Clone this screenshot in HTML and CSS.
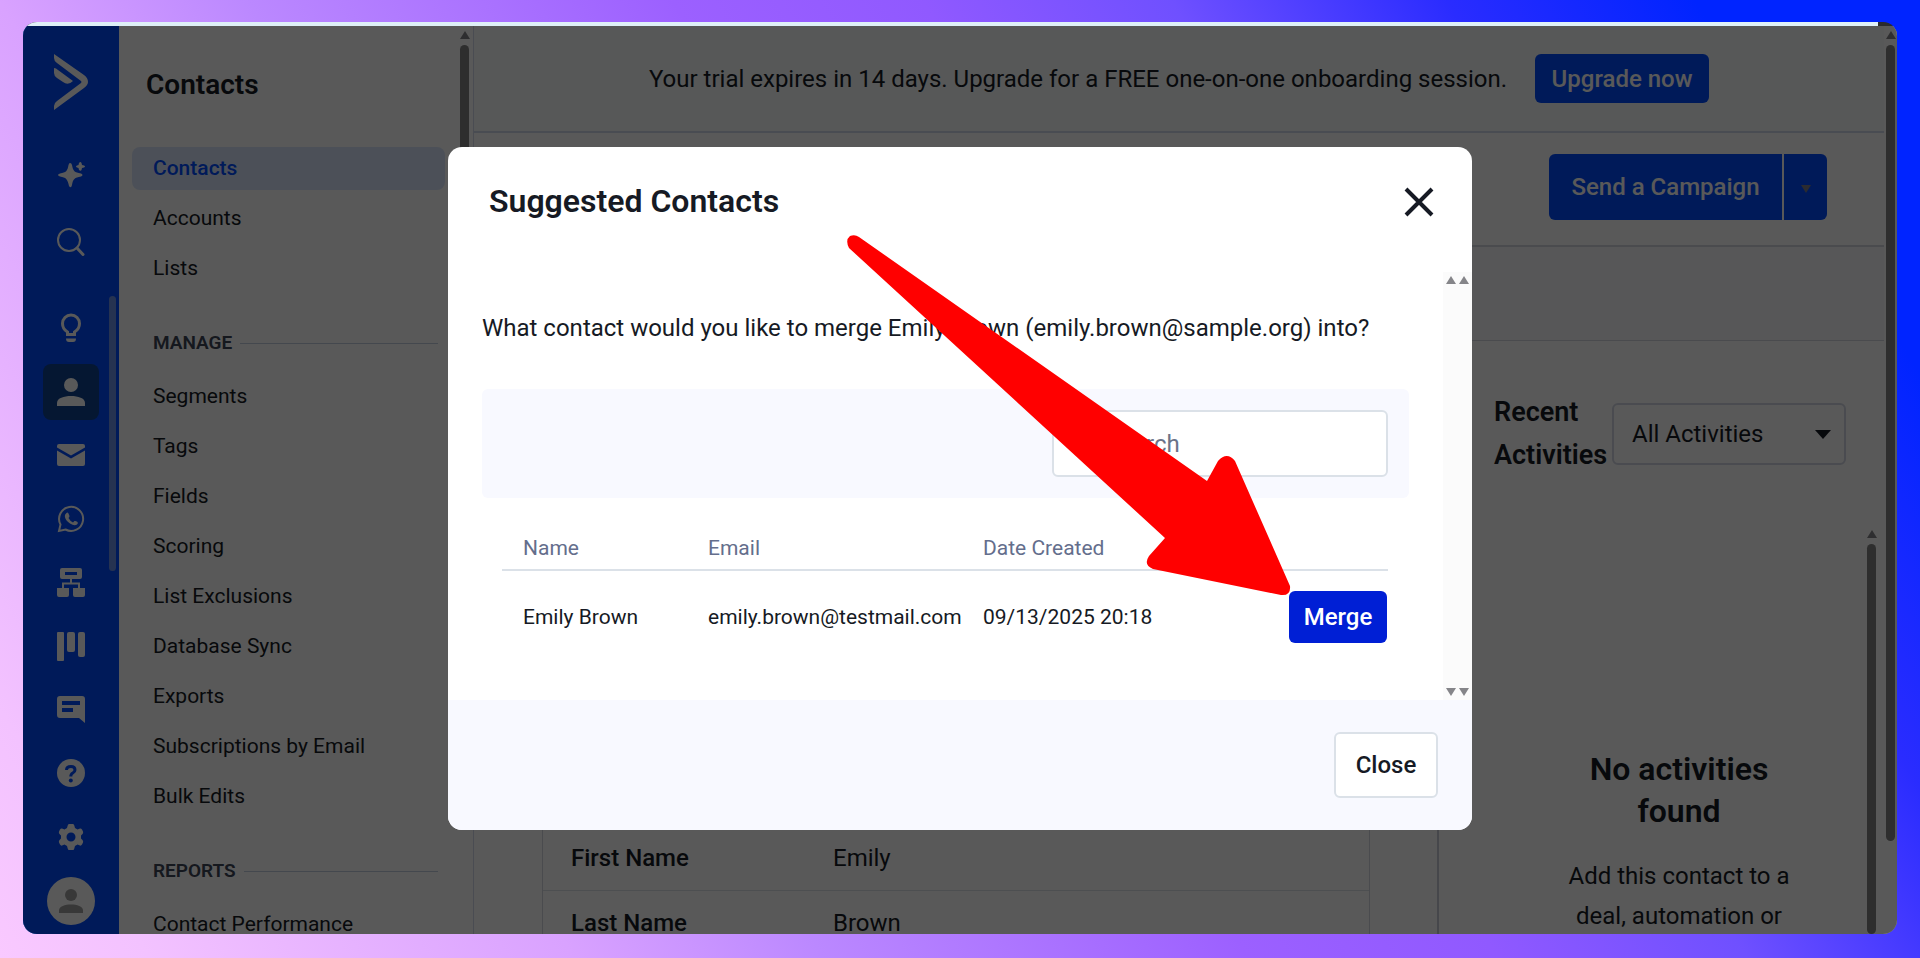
FILE: index.html
```
<!DOCTYPE html>
<html lang="en">
<head>
    <meta charset="UTF-8">
    <meta name="viewport" content="width=device-width, initial-scale=1.0">
    <title>Contacts</title>
    <link rel="stylesheet" href="styles.css">
</head>
<body>
    <div class="window">
        <div class="strip"></div>
        <div class="app">
            <nav class="rail">
                <a class="logo" href="#" aria-label="Home">
                    <svg width="36" height="56" viewBox="0 0 36 56"><path d="M1 0 L31 21 Q35 24 35 28 Q35 31 31 34 L1 56 V52 Q1 49 4 47 L28 29 Q29 28 28 27 L4 9 Q1 7 1 4 Z M1 14 Q3 14 5 16 L20 27 Q15 32 10 28 L4 24 Q1 22 1 19 Z"/></svg>
                </a>
                <div class="rail-top">
                    <a class="rail-item" href="#" aria-label="AI"><svg width="28" height="28" viewBox="0 0 28 28"><path d="M13 2 Q14.500 2 15 4 C16 10 17.500 11.500 24 12.500 Q27 14 24 15.500 C17.500 16.500 16 18 15 24 Q14 28 12 25 C10.500 18 9 16.500 3 15.500 Q-1 14 3 12.500 C9 11.500 10.500 10 11.500 4 Q12 2 13 2 Z M22 2 Q23.500 0 24.500 2 L25 4 L27 4.500 Q29 5.500 27 6.500 L25 7 L24.500 9 Q23.500 10.500 22 9 L21.500 7 L20 6.500 Q18 5.500 20 4.500 L21.500 4 Z"/></svg></a>
                    <a class="rail-item" href="#" aria-label="Search"><svg width="28" height="28" viewBox="0 0 28 28"><circle class="line" cx="12" cy="12" r="11"/><path class="line thick" d="M20 20 L26 26.500"/></svg></a>
                </div>
                <div class="rail-list">
                    <a class="rail-item" href="#" aria-label="Tips"><svg width="28" height="30" viewBox="0 0 28 30"><path class="line bold" d="M10.500 21.500 V19 Q5.500 16 5.500 10.500 A8.500 8.500 0 0 1 22.500 10.500 Q22.500 16 17.500 19 V21.500 Z"/><path d="M9 25.500 H19 Q19 29 16 29 H12 Q9 29 9 25.500 Z"/></svg></a>
                    <a class="rail-item current" href="#" aria-label="Contacts"><svg width="28" height="28" viewBox="0 0 28 28"><circle cx="14" cy="7" r="7"/><path d="M0 28 V25 C0 20 7 18 14 18 C21 18 28 20 28 25 V28 Z"/></svg></a>
                    <a class="rail-item" href="#" aria-label="Campaigns"><svg width="28" height="22" viewBox="0 0 28 22"><path d="M2 0 H26 Q28 0 28 2 V3.500 L14 11.500 L0 3.500 V2 Q0 0 2 0 Z M0 6.500 L14 14.500 L28 6.500 V20 Q28 22 26 22 H2 Q0 22 0 20 Z"/></svg></a>
                    <a class="rail-item" href="#" aria-label="WhatsApp"><svg width="28" height="28" viewBox="0 0 28 28"><path class="line" d="M2 26 L3.500 19.500 A12 12 0 1 1 8.500 24.500 Z"/><path d="M9.500 8 Q10.500 7 11.500 8.500 L12.500 11 Q12.500 12 11.500 13 Q13 16 16 17.500 L17.500 16 Q18.500 15.500 20.500 17 Q21.500 18 20 19.500 Q17.500 21.500 13 18.500 Q8 15 7.800 11 Q8 9 9.500 8 Z"/></svg></a>
                    <a class="rail-item" href="#" aria-label="Automations"><svg width="28" height="29" viewBox="0 0 28 29"><path fill-rule="evenodd" d="M5 0 H23 Q25 0 25 2 V9 Q25 11 23 11 H5 Q3 11 3 9 V2 Q3 0 5 0 Z M8 4 V7 H20 V4 Z"/><path class="line" d="M14 11 V15.500 M6 20 V15.500 H22 V20"/><path d="M0 20 H12 V27 Q12 29 10 29 H2 Q0 29 0 27 Z M16 20 H28 V27 Q28 29 26 29 H18 Q16 29 16 27 Z"/></svg></a>
                    <a class="rail-item" href="#" aria-label="Deals"><svg width="28" height="29" viewBox="0 0 28 29"><rect width="7" height="29" rx="1"/><rect x="10" width="8" height="20" rx="2"/><rect x="21" width="7" height="25" rx="2"/></svg></a>
                    <a class="rail-item" href="#" aria-label="Conversations"><svg width="28" height="27" viewBox="0 0 28 27"><path fill-rule="evenodd" d="M3 0 H25 Q28 0 28 3 V27 L22 22 H3 Q0 22 0 19 V3 Q0 0 3 0 Z M5 5 V9 H23 V5 Z M5 12 V16 H16 V12 Z"/></svg></a>
                    <a class="rail-item" href="#" aria-label="Help"><svg width="28" height="28" viewBox="0 0 28 28"><circle cx="14" cy="14" r="14"/><path class="hole" d="M9.500 11 Q9.500 7.500 14 7.500 Q18 7.500 18 11 Q18 12.800 15.800 14 Q13.800 15 13.800 17.500"/><circle class="hole-dot" cx="13.800" cy="21.500" r="2"/></svg></a>
                    <a class="rail-item" href="#" aria-label="Settings"><svg width="28" height="28" viewBox="0 0 28 28"><path fill-rule="evenodd" d="M12 1 H16 Q17 1 17.300 2.500 L18 5 L20.500 6.500 L23 5.500 Q24 5 25 6.500 L26 8.500 Q26.500 10 25.500 11 L24 12.500 V15.500 L25.500 17 Q26.500 18 26 19.500 L25 21.500 Q24 23 23 22.500 L20.500 21.500 L18 23 L17.300 25.500 Q17 27 16 27 H12 Q11 27 10.700 25.500 L10 23 L7.500 21.500 L5 22.500 Q4 23 3 21.500 L2 19.500 Q1.500 18 2.500 17 L4 15.500 V12.500 L2.500 11 Q1.500 10 2 8.500 L3 6.500 Q4 5 5 5.500 L7.500 6.500 L10 5 L10.700 2.500 Q11 1 12 1 Z M14 9.500 A4.500 4.500 0 1 0 14 18.500 A4.500 4.500 0 1 0 14 9.500 Z"/></svg></a>
                    <div class="rail-thumb"></div>
                </div>
                <a class="avatar" href="#" aria-label="Profile"><svg width="24" height="24" viewBox="0 0 28 28"><circle cx="14" cy="7" r="7"/><path d="M0 28 V25 C0 20 7 18 14 18 C21 18 28 20 28 25 V28 Z"/></svg></a>
            </nav>

            <aside class="sidebar">
                <div class="sidebar-content">
                    <h1>Contacts</h1>
                    <a class="side-link active" href="#">Contacts</a>
                    <a class="side-link" href="#">Accounts</a>
                    <a class="side-link" href="#">Lists</a>
                    <h2 class="side-heading">MANAGE</h2>
                    <a class="side-link" href="#">Segments</a>
                    <a class="side-link" href="#">Tags</a>
                    <a class="side-link" href="#">Fields</a>
                    <a class="side-link" href="#">Scoring</a>
                    <a class="side-link" href="#">List Exclusions</a>
                    <a class="side-link" href="#">Database Sync</a>
                    <a class="side-link" href="#">Exports</a>
                    <a class="side-link" href="#">Subscriptions by Email</a>
                    <a class="side-link" href="#">Bulk Edits</a>
                    <h2 class="side-heading">REPORTS</h2>
                    <a class="side-link" href="#">Contact Performance</a>
                </div>
                <div class="scrollbar side-scroll">
                    <span class="arrow-up"></span>
                    <span class="thumb"></span>
                </div>
            </aside>

            <main class="main">
                <div class="banner">
                    <span>Your trial expires in 14 days. Upgrade for a FREE one-on-one onboarding session.</span>
                    <button type="button" class="upgrade">Upgrade now</button>
                </div>
                <div class="toolbar">
                    <button type="button" class="send">Send a Campaign</button>
                    <button type="button" class="send-more" aria-label="More options"><span class="arrow-down"></span></button>
                </div>
                <div class="subbar"></div>
                <div class="columns">
                    <section class="details">
                        <dl class="card">
                            <div class="field"><dt>First Name</dt><dd>Emily</dd></div>
                            <div class="field"><dt>Last Name</dt><dd>Brown</dd></div>
                        </dl>
                    </section>
                    <section class="activity">
                        <div class="activity-head">
                            <h2><label for="activityType">Recent Activities</label></h2>
                            <div class="select-box">
                                <select id="activityType">
                                    <option>All Activities</option>
                                </select>
                                <span class="arrow-down"></span>
                            </div>
                        </div>
                        <div class="activity-list">
                            <div class="empty">
                                <h3>No activities found</h3>
                                <p>Add this contact to a deal, automation or</p>
                            </div>
                            <div class="scrollbar list-scroll">
                                <span class="arrow-up"></span>
                                <span class="thumb"></span>
                            </div>
                        </div>
                    </section>
                </div>
            </main>
            <div class="scrollbar page-scroll">
                <span class="arrow-up"></span>
                <span class="thumb"></span>
            </div>

            <div class="overlay">
                <div class="modal" role="dialog" aria-labelledby="modalTitle">
                    <div class="modal-header">
                        <h2 id="modalTitle">Suggested Contacts</h2>
                        <button type="button" class="modal-x" aria-label="Close dialog">
                            <svg width="30" height="30" viewBox="0 0 30 30"><path d="M2 2 L28 28 M28 2 L2 28"/></svg>
                        </button>
                    </div>
                    <div class="modal-body">
                        <div class="modal-content">
                            <p class="question">What contact would you like to merge Emily Brown (emily.brown@sample.org) into?</p>
                            <div class="filter">
                                <input type="text" id="search" placeholder="Search" aria-label="Search">
                            </div>
                            <table class="contacts">
                                <thead>
                                    <tr><th class="col-name">Name</th><th class="col-email">Email</th><th>Date Created</th><th></th></tr>
                                </thead>
                                <tbody>
                                    <tr><td>Emily Brown</td><td>emily.brown@testmail.com</td><td>09/13/2025 20:18</td><td class="action"><button type="button" class="merge">Merge</button></td></tr>
                                </tbody>
                            </table>
                        </div>
                        <div class="tracks">
                            <div class="track"><span class="arrow-up"></span><span class="arrow-down"></span></div>
                            <div class="track"><span class="arrow-up"></span><span class="arrow-down"></span></div>
                        </div>
                    </div>
                    <div class="modal-footer">
                        <button type="button" class="close">Close</button>
                    </div>
                    <!-- pointer towards the merge button -->
                    <svg class="pointer" width="446" height="364" viewBox="846 233 446 364"><path d="M859 237 L1207 481 L1218 461 Q1227 451 1235 461 L1290 586 Q1291 596 1281 595 L1153 569 Q1143 565 1149 556 L1165 538 L849 248 Q845 240 850 236 Q855 234 859 237 Z"/></svg>
                </div>
            </div>
        </div>
    </div>
</body>
</html>
```

FILE: styles.css
```
* {
    box-sizing: border-box;
}
body {
    margin: 0;
    height: 100vh;
    padding: 22px 23px 24px;
    font-family: Roboto, "Liberation Sans", sans-serif;
    font-size: 24px;
    color: #161a24;
    background: linear-gradient(59deg, #f9c9ff 0%, #f3c2ff 6%, #d9a2ff 23%, #bb88ff 33%, #9c60ff 50%, #9059ff 60%, #6f50ff 70%, #2a2cff 81%, #0024ff 91%);
}
h1, h2, h3, p, dl, dd {
    margin: 0;
}
a {
    color: inherit;
    text-decoration: none;
}
button, input, select {
    font: inherit;
    color: inherit;
}
button {
    border: none;
    border-radius: 6px;
    padding: 0;
}
.window {
    height: 100%;
    display: flex;
    flex-direction: column;
    border-radius: 14px;
    overflow: hidden;
    background: #2b2b2f;
}
.strip {
    height: 4px;
    margin-right: 19px;
    background: #dff0f8;
}
.app {
    flex: 1;
    min-height: 0;
    display: flex;
    position: relative;
    background: #fff;
}

/* icon rail */
.rail {
    width: 96px;
    display: flex;
    flex-direction: column;
    align-items: center;
    padding-bottom: 9px;
    background: #004cff;
}
.rail svg {
    display: block;
    fill: #fff;
}
.rail .line {
    fill: none;
    stroke: #fff;
    stroke-width: 2;
}
.rail .thick {
    stroke-width: 3;
    stroke-linecap: round;
}
.rail .bold {
    stroke-width: 3;
}
.rail .hole {
    fill: none;
    stroke: #004cff;
    stroke-width: 3;
}
.rail .hole-dot {
    fill: #004cff;
}
.logo {
    height: 121px;
    padding-top: 28px;
}
.rail-top {
    display: grid;
    gap: 11px;
    margin-bottom: 30px;
}
.rail-item {
    width: 56px;
    height: 56px;
    display: flex;
    align-items: center;
    justify-content: center;
    border-radius: 8px;
}
.rail-item.current {
    background: #10428f;
}
.rail-list {
    flex: 1;
    width: 100%;
    display: flex;
    flex-direction: column;
    align-items: center;
    justify-content: space-between;
    position: relative;
}
.rail-thumb {
    position: absolute;
    right: 3px;
    top: -4px;
    width: 7px;
    height: 275px;
    border-radius: 4px;
    background: #6e92e8;
}
.avatar {
    width: 48px;
    height: 48px;
    margin-top: 12px;
    border-radius: 50%;
    background: #fff;
    display: flex;
    align-items: center;
    justify-content: center;
}
.avatar svg {
    fill: #a0a0a0;
}

/* sidebar */
.sidebar {
    width: 355px;
    display: flex;
    border-right: 1px solid #d5dbea;
    overflow: hidden;
}
.sidebar-content {
    flex: 1;
    padding: 0 0 0 13px;
}
.sidebar h1 {
    padding: 39px 0 42px 14px;
    font-size: 28px;
    line-height: 40px;
    font-weight: 600;
}
.side-link {
    display: block;
    margin-bottom: 7px;
    padding-left: 21px;
    border-radius: 8px;
    font-size: 21px;
    line-height: 43px;
}
.side-link.active {
    color: #004cff;
    font-weight: 500;
    background: #dbe6fb;
}
.side-heading {
    display: flex;
    align-items: center;
    gap: 8px;
    margin: 39px 7px 18px 21px;
    font-size: 19px;
    line-height: 28px;
    font-weight: 600;
    color: #3d4658;
}
.side-heading::after {
    content: "";
    flex: 1;
    height: 1px;
    background: #c4cde0;
}

/* scrollbars */
.scrollbar {
    width: 13px;
    padding-top: 5px;
    display: flex;
    flex-direction: column;
    align-items: center;
    gap: 6px;
}
.side-scroll {
    width: 28px;
    padding-left: 11px;
}
.side-scroll .thumb {
    flex: none;
    height: 500px;
}
.list-scroll {
    width: 19px;
    padding-right: 6px;
}
.thumb {
    width: 9px;
    flex: 1;
    border-radius: 5px;
    background: #858585;
}
.arrow-up {
    border: 5px solid transparent;
    border-top: none;
    border-bottom: 8px solid #858589;
}
.arrow-down {
    border: 5px solid transparent;
    border-bottom: none;
    border-top: 8px solid #858589;
}
.page-scroll .thumb {
    flex: none;
    height: calc(100% - 107px);
}

/* main area */
.main {
    flex: 1;
    min-width: 0;
    display: flex;
    flex-direction: column;
    overflow: hidden;
}
.banner {
    flex: none;
    height: 107px;
    display: flex;
    align-items: center;
    justify-content: center;
    gap: 28px;
    border-bottom: 2px solid #d0d9ec;
    background: #f9fbfd;
}
.upgrade {
    width: 174px;
    height: 49px;
    background: #004cff;
    color: #fff;
    font-weight: 500;
}
.toolbar {
    flex: none;
    height: 114px;
    display: flex;
    align-items: center;
    justify-content: flex-end;
    gap: 2px;
    padding: 0 57px 4px 0;
    border-bottom: 2px solid #d3d8e0;
}
.send, .send-more {
    height: 66px;
    background: #004cff;
    color: #fff;
    font-weight: 500;
}
.send {
    width: 233px;
    border-radius: 6px 0 0 6px;
}
.send-more {
    width: 43px;
    border-radius: 0 6px 6px 0;
}
.send-more .arrow-down {
    display: inline-block;
    vertical-align: middle;
    border-top-color: #7c7c88;
}
.subbar {
    flex: none;
    height: 94px;
    border-bottom: 1px solid #d3d8e0;
    background: #f8fafd;
}
.columns {
    flex: 1;
    min-height: 0;
    display: flex;
}
.details {
    flex: 1;
    padding: 485px 67px 0 68px;
}
.card {
    height: 400px;
    border: 1px solid #d3d8e0;
    border-top: none;
}
.field {
    display: flex;
    height: 65px;
    padding-left: 28px;
    line-height: 65px;
    border-bottom: 1px solid #dde2e8;
}
.field dt {
    width: 262px;
    font-weight: 500;
}
.activity {
    width: 447px;
    display: flex;
    flex-direction: column;
    border-left: 2px solid #c9ccd8;
}
.activity-head {
    display: flex;
    align-items: center;
    justify-content: space-between;
    padding: 50px 38px 0 55px;
}
.activity h2 {
    width: 118px;
    font-size: 27px;
    line-height: 43px;
    font-weight: 600;
}
.select-box {
    width: 234px;
    height: 62px;
    display: flex;
    align-items: center;
    position: relative;
}
.select-box select {
    width: 100%;
    height: 100%;
    padding-left: 18px;
    appearance: none;
    border: 2px solid #d3d8e4;
    border-radius: 6px;
    background: #fff;
}
.select-box .arrow-down {
    position: absolute;
    right: 15px;
    border-width: 9px 8px 0;
    border-top-color: #161a24;
}
.activity-list {
    flex: 1;
    min-height: 0;
    margin-top: 48px;
    display: flex;
}
.empty {
    flex: 1;
    padding: 223px 54px 0 108px;
    text-align: center;
}
.empty h3 {
    font-size: 32px;
    line-height: 42px;
    font-weight: 600;
    margin-bottom: 24px;
}
.empty p {
    line-height: 40px;
}

/* modal */
.overlay {
    position: absolute;
    inset: 0;
    display: flex;
    justify-content: center;
    align-items: flex-start;
    padding-top: 121px;
    background: rgba(0, 0, 0, 0.65);
}
.modal {
    width: 1024px;
    max-width: 96%;
    position: relative;
    border-radius: 14px;
    background: #fff;
}
.modal-header {
    display: flex;
    align-items: center;
    justify-content: space-between;
    padding: 32px 38px 48px 41px;
}
.modal-header h2 {
    font-size: 32px;
    line-height: 45px;
    font-weight: 600;
}
.modal-x {
    background: none;
    line-height: 0;
}
.modal-x path {
    stroke: #161a24;
    stroke-width: 4;
}
.modal-body {
    display: flex;
}
.modal-content {
    flex: 1;
    padding: 36px 34px 52px;
}
.question {
    line-height: 40px;
    margin-bottom: 41px;
}
.filter {
    display: flex;
    justify-content: flex-end;
    padding: 21px;
    border-radius: 6px;
    background: #f8f9ff;
}
.filter input {
    width: 336px;
    height: 67px;
    padding: 0 20px 0 52px;
    border: 2px solid #dbe1e8;
    border-radius: 6px;
    background: #fff;
}
.filter input::placeholder {
    color: #6b7388;
    opacity: 1;
}
.contacts {
    width: calc(100% - 41px);
    margin: 28px 21px 0 20px;
    border-collapse: collapse;
    font-size: 21px;
}
.contacts th {
    height: 44px;
    padding: 0 0 0 21px;
    text-align: left;
    font-weight: 400;
    color: #646e8c;
    border-bottom: 2px solid #dbe1e8;
}
.contacts td {
    height: 78px;
    padding: 14px 0 0 21px;
}
.contacts .col-name {
    width: 185px;
}
.contacts .col-email {
    width: 275px;
}
.contacts .action {
    padding-right: 1px;
    text-align: right;
}
.merge {
    width: 98px;
    height: 52px;
    background: #001fd5;
    color: #fff;
    font-size: 24px;
    font-weight: 500;
}
.tracks {
    width: 29px;
    display: flex;
    justify-content: space-evenly;
    background: #fbfbfb;
}
.track {
    display: flex;
    flex-direction: column;
    justify-content: space-between;
    padding: 4px 0;
}
.modal-footer {
    display: flex;
    justify-content: flex-end;
    padding: 32px 34px;
    border-radius: 0 0 14px 14px;
    background: #f8f9ff;
}
.close {
    width: 104px;
    height: 66px;
    border: 2px solid #dbe1e8;
    background: #fff;
    font-weight: 500;
}
.pointer {
    position: absolute;
    left: 398px;
    top: 86px;
    fill: #f00;
    pointer-events: none;
}
```
